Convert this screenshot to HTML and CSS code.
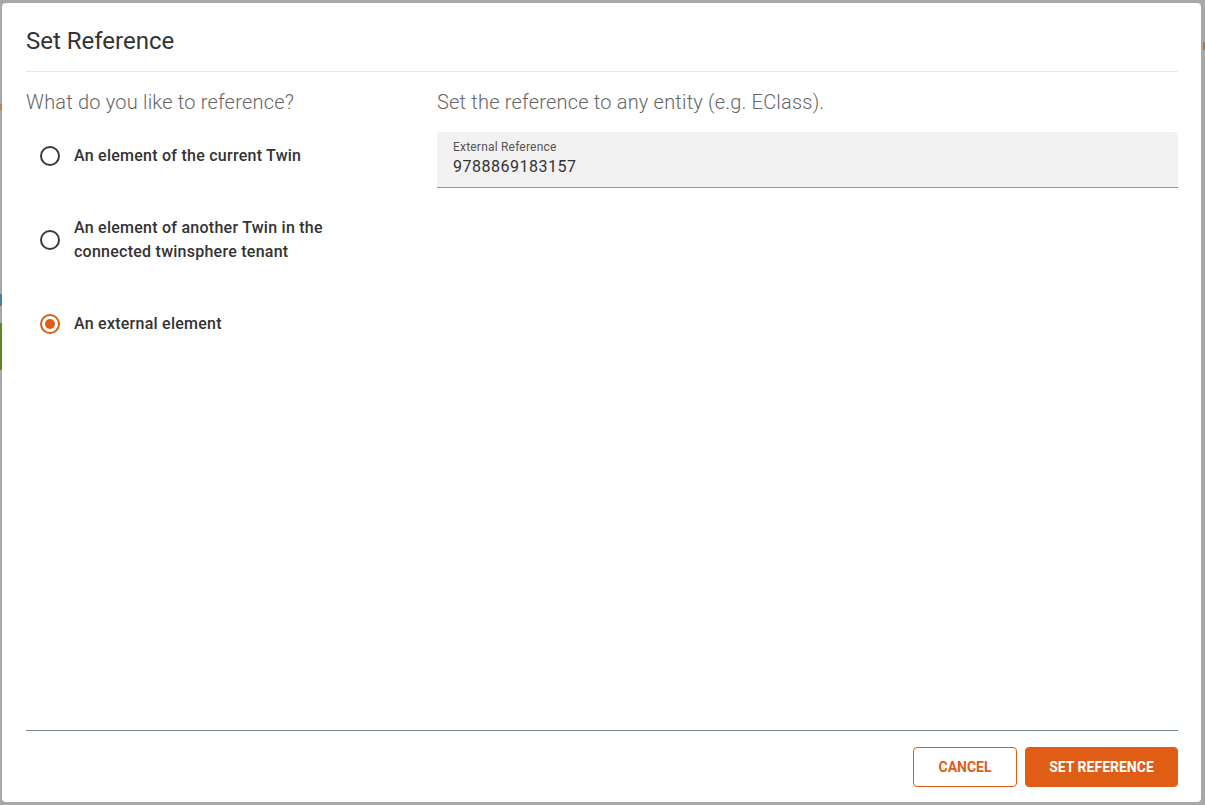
FILE: index.html
```html
<!DOCTYPE html>
<html lang="en">
<head>
<meta charset="utf-8">
<title>Set Reference</title>
<link rel="stylesheet" href="styles.css">
</head>
<body>
<div class="backdrop-marks">
  <span class="mark mark-orange-l"></span>
  <span class="mark mark-blue"></span>
  <span class="mark mark-green"></span>
  <span class="mark mark-orange-r"></span>
</div>
<div class="dialog" role="dialog" aria-labelledby="dlg-title">
  <div class="dialog-header">
    <h2 id="dlg-title" class="dialog-title">Set Reference</h2>
  </div>
  <div class="dialog-content">
    <div class="col-left">
      <p class="heading">What do you like to reference?</p>
      <div class="radio-group">
        <label class="radio-row">
          <span class="radio"></span>
          <span class="radio-label">An element of the current Twin</span>
        </label>
        <label class="radio-row">
          <span class="radio"></span>
          <span class="radio-label">An element of another Twin in the connected twinsphere tenant</span>
        </label>
        <label class="radio-row">
          <span class="radio radio-checked"></span>
          <span class="radio-label">An external element</span>
        </label>
      </div>
    </div>
    <div class="col-right">
      <p class="heading">Set the reference to any entity (e.g. EClass).</p>
      <div class="field">
        <span class="field-label">External Reference</span>
        <span class="field-value">9788869183157</span>
      </div>
    </div>
  </div>
  <div class="dialog-footer">
    <button class="btn btn-outline" type="button">CANCEL</button>
    <button class="btn btn-filled" type="button">SET REFERENCE</button>
  </div>
</div>
</body>
</html>
```
FILE: styles.css
```css
* { box-sizing: border-box; }

html, body {
  margin: 0;
  padding: 0;
}

body {
  width: 1205px;
  height: 805px;
  overflow: hidden;
  background: #a8a8a8;
  font-family: Roboto, "Liberation Sans", Arial, sans-serif;
  padding: 3px 4px 3px 2px;
  position: relative;
}

.backdrop-marks .mark {
  position: absolute;
  display: block;
}
.mark-orange-l { left: 0; top: 104px; width: 2px; height: 6px; background: #b8844e; }
.mark-blue { left: 0; top: 294px; width: 2px; height: 12px; background: #4a7ea8; }
.mark-green { left: 0; top: 323px; width: 2px; height: 47px; background: #5b8a1a; }
.mark-orange-r { right: 0; top: 42px; width: 2px; height: 8px; background: #c0703a; }

.dialog {
  position: relative;
  width: 1199px;
  height: 799px;
  background: #fff;
  border-radius: 4px;
  display: flex;
  flex-direction: column;
  padding: 0 23px 0 24px;
}

.dialog-header {
  padding-top: 24px;
  padding-bottom: 16px;
  border-bottom: 1px solid #e6e6e6;
}

.dialog-title {
  margin: 0;
  font-size: 24px;
  line-height: 28px;
  font-weight: 400;
  color: #333;
}

.dialog-content {
  flex: 1;
  display: flex;
  gap: 24px;
  padding-top: 16px;
}

.col-left {
  width: 387px;
  flex: none;
}

.col-right {
  flex: 1;
}

.heading {
  margin: 0 0 16px 0;
  font-size: 20px;
  line-height: 28px;
  font-weight: 300;
  letter-spacing: 0.2px;
  color: #666;
}

.radio-group {
  display: flex;
  flex-direction: column;
  gap: 24px;
}

.radio-row {
  display: flex;
  align-items: center;
  gap: 14px;
  padding: 12px 0;
}

.radio {
  flex: none;
  width: 20px;
  height: 20px;
  margin-left: 14px;
  border: 2px solid #3a3a3a;
  border-radius: 50%;
  display: flex;
  align-items: center;
  justify-content: center;
}

.radio-checked {
  border-color: #e05d16;
}

.radio-checked::after {
  content: "";
  width: 10px;
  height: 10px;
  border-radius: 50%;
  background: #e05d16;
}

.radio-label {
  max-width: 290px;
  font-size: 16px;
  line-height: 24px;
  font-weight: 500;
  letter-spacing: 0.25px;
  color: #333;
}

.field {
  height: 56px;
  background: #f2f2f2;
  border-radius: 4px 4px 0 0;
  border-bottom: 1px solid #949494;
  padding: 7px 16px 0 16px;
  display: flex;
  flex-direction: column;
}

.field-label {
  font-size: 12px;
  line-height: 16px;
  color: #555;
  letter-spacing: 0.2px;
}

.field-value {
  font-size: 16px;
  line-height: 24px;
  color: #333;
  letter-spacing: 0.5px;
}

.dialog-footer {
  border-top: 1px solid #708a96;
  padding: 16px 0 15px 0;
  display: flex;
  justify-content: flex-end;
  gap: 8px;
}

.btn {
  height: 40px;
  border-radius: 4px;
  font-family: Roboto, "Liberation Sans", Arial, sans-serif;
  font-size: 14px;
  font-weight: 700;
  letter-spacing: 0;
  padding: 0 23px;
  cursor: pointer;
}

.btn-outline {
  background: #fff;
  color: #e05d16;
  border: 1px solid #e05d16;
  width: 104px;
}

.btn-filled {
  background: #e05d16;
  color: #fff;
  border: 1px solid #e05d16;
  width: 153px;
}
```
